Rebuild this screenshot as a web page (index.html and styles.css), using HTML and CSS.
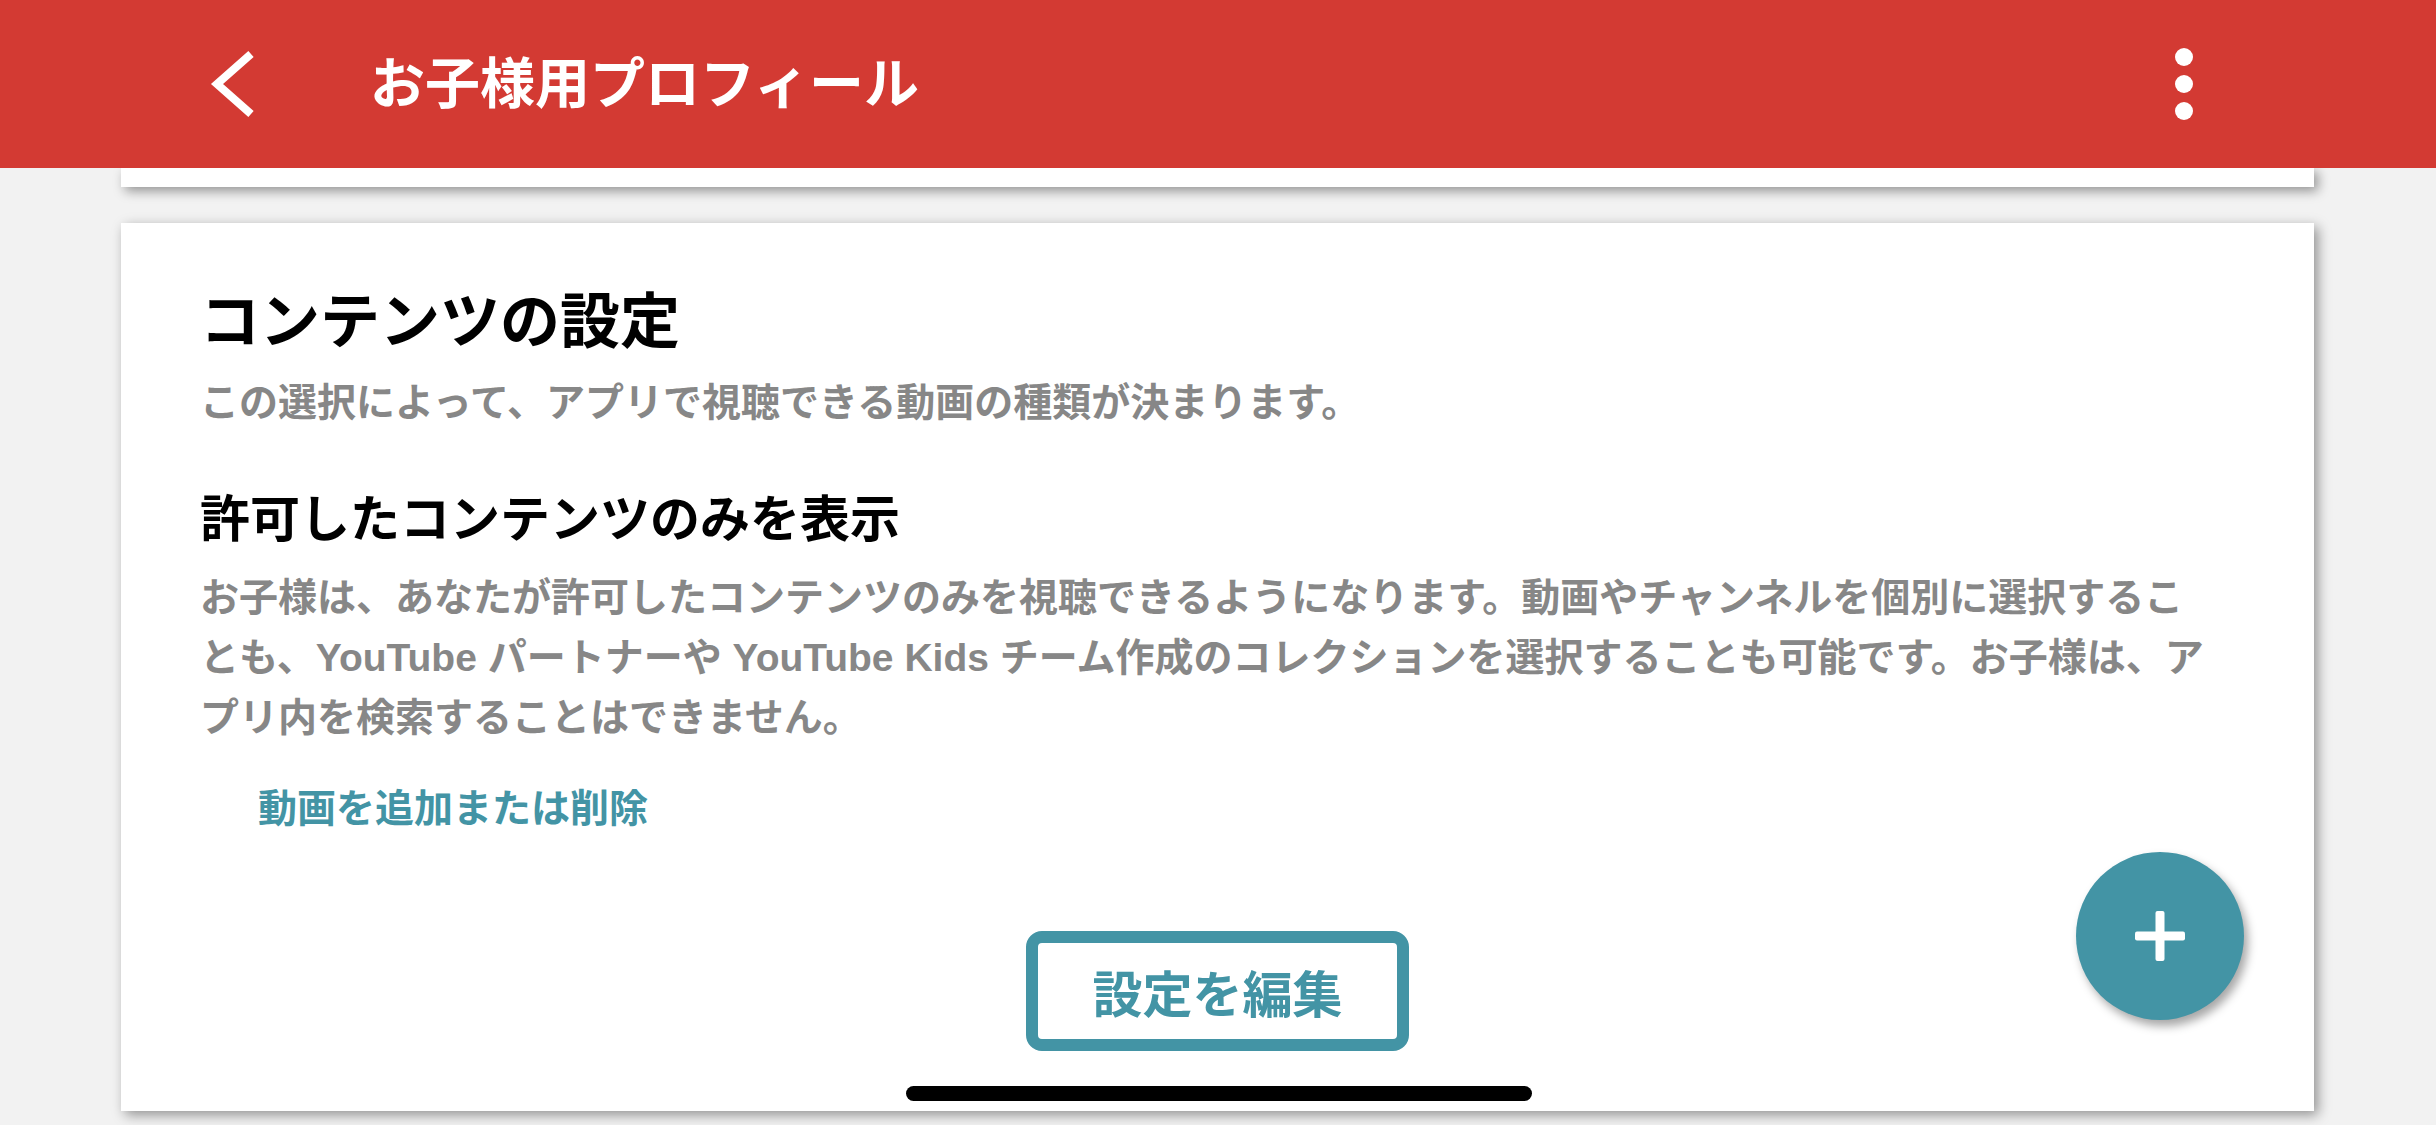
FILE: index.html
```html
<html>

<head>
  <meta http-equiv="Content-Type" content="text/html; charset=utf-8" />
  <meta name="viewport" content="width=device-width, initial-scale=1">
  <title>お子様用プロフィール</title>
  <link rel="stylesheet" href="styles.css">
</head>

<body>
  <div class="topbar">
    <a class="back">
      <svg width="60" height="80" viewBox="0 0 60 80">
        <polyline points="51,10 17,40 51,70" fill="none" stroke="#fff" stroke-width="8" />
      </svg>
    </a>
    <h1 class="title">お子様用プロフィール</h1>
    <div class="kebab"><i></i><i></i><i></i></div>
  </div>

  <div class="main">
    <div class="card stub"></div>

    <div class="card">
      <h2>コンテンツの設定</h2>
      <p class="sub">この選択によって、アプリで視聴できる動画の種類が決まります。</p>

      <h3>許可したコンテンツのみを表示</h3>
      <p class="desc">お子様は、あなたが許可したコンテンツのみを視聴できるようになります。動画やチャンネルを個別に選択するこ<br>とも、YouTube パートナーや YouTube Kids チーム作成のコレクションを選択することも可能です。お子様は、ア<br>プリ内を検索することはできません。</p>

      <a class="link">動画を追加または削除</a>

      <div class="actions">
        <a class="edit">設定を編集</a>
      </div>
    </div>
  </div>

  <a class="fab">
    <svg width="50" height="50" viewBox="0 0 50 50">
      <rect x="0" y="20.5" width="50" height="9" rx="2" fill="#fff" />
      <rect x="20.5" y="0" width="9" height="50" rx="2" fill="#fff" />
    </svg>
  </a>

  <div class="home"></div>
</body>

</html>
```

FILE: styles.css
```css
body,
html {
  margin: 0;
  padding: 0;
}

body {
  height: 1125px;
  overflow: hidden;
  background: #f2f2f2;
  font-family: "Liberation Sans", "Noto Sans CJK JP", sans-serif;
  font-weight: 700;
}

.topbar {
  position: relative;
  z-index: 2;
  display: flex;
  align-items: center;
  height: 168px;
  padding-left: 200px;
  background: #d33a33;
}

.back {
  display: block;
  width: 60px;
  height: 80px;
}

.back svg {
  display: block;
}

.title {
  flex: 1;
  margin: 0 0 0 110px;
  color: #fff;
  font-size: 55px;
  line-height: 60px;
  font-weight: 700;
}

.kebab {
  display: flex;
  flex-direction: column;
  gap: 9px;
  margin-right: 243px;
}

.kebab i {
  display: block;
  width: 18px;
  height: 18px;
  border-radius: 50%;
  background: #fff;
}

.main {
  padding: 0 122px 0 121px;
}

.card {
  background: #fff;
  box-shadow: 4px 4px 12px rgba(0, 0, 0, 0.4);
  padding: 64px 79px 60px 79px;
}

.card.stub {
  height: 19px;
  padding: 0;
  margin-bottom: 36px;
}

h2 {
  margin: 0;
  color: #000;
  font-size: 60px;
  line-height: 72px;
}

.sub {
  margin: 14px 0 0 0;
  color: #878787;
  font-size: 39px;
  line-height: 60px;
}

h3 {
  margin: 57px 0 0 0;
  color: #000;
  font-size: 50px;
  line-height: 60px;
}

.desc {
  margin: 18px 0 0 0;
  color: #878787;
  font-size: 39px;
  line-height: 60px;
  white-space: nowrap;
}

.link {
  display: block;
  margin: 31px 0 0 58px;
  color: #4394a5;
  font-size: 39px;
  line-height: 60px;
}

.actions {
  display: flex;
  justify-content: center;
  margin-top: 92px;
}

.edit {
  display: flex;
  align-items: center;
  justify-content: center;
  box-sizing: border-box;
  width: 383px;
  height: 120px;
  border: 12px solid #4394a5;
  border-radius: 16px;
  color: #4394a5;
  font-size: 50px;
}

.fab {
  position: fixed;
  right: 192px;
  bottom: 105px;
  display: flex;
  align-items: center;
  justify-content: center;
  width: 168px;
  height: 168px;
  border-radius: 50%;
  background: #4394a5;
  box-shadow: 4px 6px 10px rgba(0, 0, 0, 0.35);
}

.home {
  position: fixed;
  left: 50%;
  bottom: 24px;
  width: 626px;
  height: 15px;
  margin-left: -312px;
  border-radius: 8px;
  background: #000;
}
```
